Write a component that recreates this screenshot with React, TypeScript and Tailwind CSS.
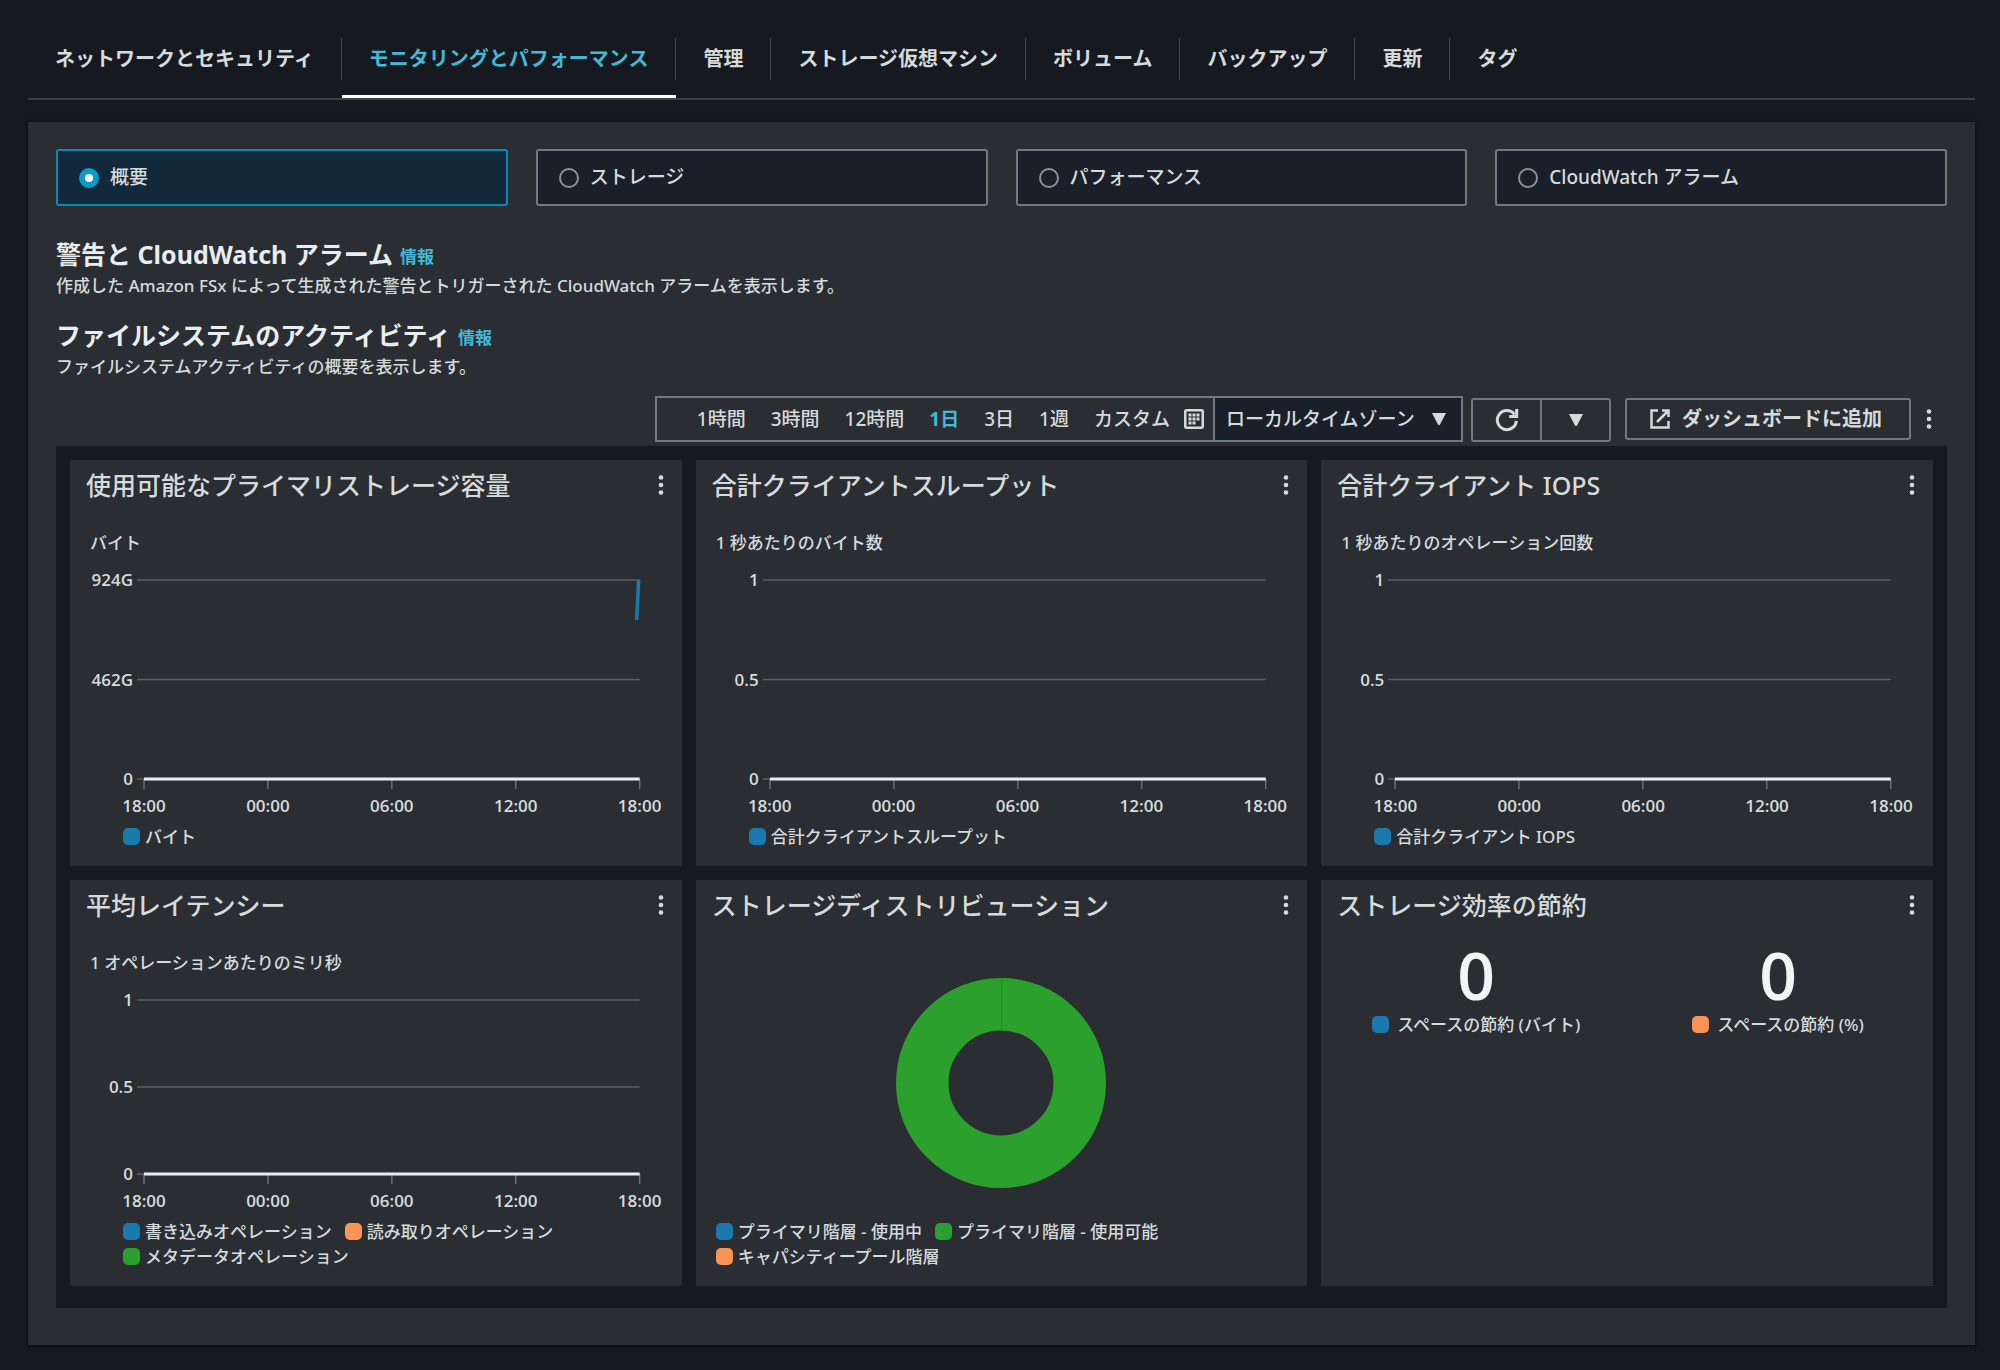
import { useState } from "react";
import type { ReactNode } from "react";

const tabs = [
  "ネットワークとセキュリティ",
  "モニタリングとパフォーマンス",
  "管理",
  "ストレージ仮想マシン",
  "ボリューム",
  "バックアップ",
  "更新",
  "タグ",
];

const views = ["概要", "ストレージ", "パフォーマンス", "CloudWatch アラーム"];
const ranges = ["1時間", "3時間", "12時間", "1日", "3日", "1週"];
const hours = ["18:00", "00:00", "06:00", "12:00", "18:00"];

function Kebab({ label }: { label: string }) {
  return (
    <button type="button" aria-label={label} className="flex h-6 w-4 items-center justify-center">
      <svg width="6" height="22" viewBox="0 0 6 22" fill="#d5dbdb" aria-hidden="true">
        <circle cx="3" cy="3.5" r="2.3" />
        <circle cx="3" cy="11" r="2.3" />
        <circle cx="3" cy="18.5" r="2.3" />
      </svg>
    </button>
  );
}

function Caret() {
  return (
    <svg width="14" height="12" viewBox="0 0 14 12" fill="#d5dbdb" aria-hidden="true">
      <path d="M0 0h14L8 11.500q-1 1-2 0z" />
    </svg>
  );
}

function Swatch({ color }: { color: string }) {
  return <span className={`size-[17px] shrink-0 rounded-[5px] ${color}`} />;
}

type Series = { name: string; color: string };

function Legend({ items, indent }: { items: Series[]; indent: string }) {
  return (
    <ul className={`flex flex-wrap gap-x-[13px] ${indent}`}>
      {items.map((s) => (
        <li key={s.name} className="flex h-[25px] items-center gap-[5px] text-[17px] font-medium">
          <Swatch color={s.color} />
          {s.name}
        </li>
      ))}
    </ul>
  );
}

function Card({ title, children }: { title: string; children: ReactNode }) {
  return (
    <section className="flex flex-col bg-[#2a2e33] pb-[17px]">
      <header className="flex h-[50px] shrink-0 items-center justify-between pl-4 pr-[13px]">
        <h3 className="text-[25px] font-medium leading-8">{title}</h3>
        <Kebab label={`${title}のメニュー`} />
      </header>
      {children}
    </section>
  );
}

function LineChart({
  unit,
  labels,
  series,
  children,
}: {
  unit: string;
  labels: string[];
  series: Series[];
  children?: ReactNode;
}) {
  return (
    <>
      <p className="mt-[21px] h-6 shrink-0 pl-5 text-[17px] font-medium leading-6">{unit}</p>
      <div className="mt-[25px] flex flex-1 pr-[42px]">
        <div className="-my-3 flex w-[63px] flex-col justify-between text-right font-['Open_Sans',sans-serif] text-[17px] font-semibold leading-6">
          {labels.map((l) => (
            <span key={l}>{l}</span>
          ))}
        </div>
        <div className="relative ml-1 flex-1 pl-[7px]">
          <svg width="100%" height="100%" className="absolute inset-0 overflow-visible" aria-hidden="true">
            <g stroke="#5a6066" strokeWidth="1.5">
              <line x1="0" x2="100%" y1="0" y2="0" />
              <line x1="0" x2="100%" y1="50%" y2="50%" />
              <line x1="0" x2="7" y1="100%" y2="100%" />
            </g>
          </svg>
          <div className="relative h-full">
            <svg width="100%" height="100%" className="absolute inset-0 overflow-visible" aria-hidden="true">
              <svg width="100%" height="10" y="100%" className="overflow-visible">
                <g stroke="#687078" strokeWidth="1.5">
                  <line x1="0" x2="0" y1="0" y2="10" />
                  <line x1="25%" x2="25%" y1="0" y2="10" />
                  <line x1="50%" x2="50%" y1="0" y2="10" />
                  <line x1="75%" x2="75%" y1="0" y2="10" />
                  <line x1="100%" x2="100%" y1="0" y2="10" />
                </g>
              </svg>
              <line x1="0" x2="100%" y1="100%" y2="100%" stroke="#eaeded" strokeWidth="3" />
              {children}
            </svg>
          </div>
        </div>
      </div>
      <div className="ml-[74px] mr-[42px] mt-[15px] flex h-6 shrink-0 justify-between font-['Open_Sans',sans-serif] text-[17px] font-semibold leading-6">
        {hours.map((h, i) => (
          <span key={i} className="flex w-0 justify-center">
            {h}
          </span>
        ))}
      </div>
      <div className="mt-1.5">
        <Legend items={series} indent="pl-[53px] pr-6" />
      </div>
    </>
  );
}

function Stat({ value, name, color }: { value: string; name: string; color: string }) {
  return (
    <div className="flex flex-col items-center">
      <strong className="mt-1.5 font-['Open_Sans',sans-serif] text-[66px] font-semibold leading-[76px] text-[#f2f3f3]">
        {value}
      </strong>
      <div className="flex h-[25px] items-center gap-2 text-[17px] font-medium">
        <Swatch color={color} />
        {name}
      </div>
    </div>
  );
}

function SectionHeading({ title, text }: { title: string; text: string }) {
  return (
    <div>
      <h2 className="flex items-center gap-[7px] text-[25px] font-bold leading-[38px] text-[#eaeded]">
        {title}
        <a href="#info" className="pt-1.5 text-[17px] leading-6 text-[#44b9d6]">
          情報
        </a>
      </h2>
      <p className="text-[17px] font-medium leading-[26px]">{text}</p>
    </div>
  );
}

const blue = "bg-[#1a7aae]";
const orange = "bg-[#fb9356]";
const green = "bg-[#2ca02c]";

export default function App() {
  const [view, setView] = useState(0);
  const [range, setRange] = useState(3);

  return (
    <main className="min-h-screen bg-[#161920] pb-[25px] pl-7 pr-[25px] pt-[38px] font-['Noto_Sans','Noto_Sans_CJK_JP',sans-serif] text-[#d5dbdb]">
      <nav className="border-b-2 border-[#3c4147]">
        <ul className="flex">
          {tabs.map((tab, i) => (
            <li key={tab}>
              <a
                href={`#tab-${i}`}
                aria-current={i === 1 ? "page" : undefined}
                className={`flex h-[60px] items-start ${
                  i === 1 ? "border-b-[3px] border-white text-[#44b9d6]" : ""
                }`}
              >
                <span
                  className={`flex h-[42px] items-center whitespace-nowrap px-[27px] text-[20px] font-bold ${
                    i < tabs.length - 1 ? "border-r border-[#414750]" : ""
                  }`}
                >
                  {tab}
                </span>
              </a>
            </li>
          ))}
        </ul>
      </nav>

      <div className="mt-[22px] bg-[#2a2e33] px-7 pb-[37px] pt-[27px] shadow-[0_1px_3px_1px_rgba(0,0,0,0.5)]">
        <fieldset aria-label="表示" className="grid grid-cols-4 gap-7">
          {views.map((name, i) => (
            <label
              key={name}
              className={`flex h-[57px] items-center gap-[11px] rounded-[3px] border-2 px-[21px] text-[19px] font-medium ${
                i === view ? "border-[#0a89b9] bg-[#12293b]" : "border-[#6f7a7d] bg-[#1a2029]"
              }`}
            >
              <input
                type="radio"
                name="view"
                checked={i === view}
                onChange={() => setView(i)}
                className="size-5 appearance-none rounded-full border-2 border-[#879596] checked:border-[6px] checked:border-[#0a9cc7] checked:bg-white"
              />
              {name}
            </label>
          ))}
        </fieldset>

        <div className="mt-[29px] flex flex-col gap-[17px]">
          <SectionHeading
            title="警告と CloudWatch アラーム"
            text="作成した Amazon FSx によって生成された警告とトリガーされた CloudWatch アラームを表示します。"
          />
          <SectionHeading title="ファイルシステムのアクティビティ" text="ファイルシステムアクティビティの概要を表示します。" />
        </div>

        <div className="mt-4 flex items-center justify-end pr-[10px] text-[19px] font-medium">
          <div className="flex h-[46px] items-center border-2 border-[#6f7a7d]">
            <div className="flex items-center gap-[25px] pl-10 pr-[9px]">
              {ranges.map((r, i) => (
                <button
                  key={r}
                  type="button"
                  onClick={() => setRange(i)}
                  className={i === range ? "font-bold text-[#44b9d6]" : ""}
                >
                  {r}
                </button>
              ))}
              <button type="button" className="flex items-center gap-[14px]">
                カスタム
                <svg width="20" height="20" viewBox="0 0 20 20" aria-hidden="true">
                  <rect x="1.25" y="1.25" width="17.5" height="17.5" rx="1.5" fill="none" stroke="#d5dbdb" strokeWidth="2.5" />
                  <path
                    fill="#d5dbdb"
                    d="M4.500 4.500h3v3h-3zM8.500 4.500h3v3h-3zM12.500 4.500h3v3h-3zM4.500 8.500h3v3h-3zM8.500 8.500h3v3h-3zM12.500 8.500h3v3h-3zM4.500 12.500h3v3h-3zM8.500 12.500h3v3h-3z"
                  />
                </svg>
              </button>
            </div>
            <div className="relative flex h-full items-center border-l-2 border-[#6f7a7d] bg-[#1a2029]">
              <select
                aria-label="タイムゾーン"
                className="h-full w-[246px] appearance-none bg-transparent pl-[11px] outline-none"
              >
                <option>ローカルタイムゾーン</option>
              </select>
              <span className="pointer-events-none absolute right-[15px]">
                <Caret />
              </span>
            </div>
          </div>
          <div className="ml-2 flex h-[46px] items-stretch pt-0.5">
            <button
              type="button"
              aria-label="更新"
              className="flex w-[71px] items-center justify-center rounded-l-[3px] border-2 border-[#6f7a7d]"
            >
              <svg width="24" height="24" viewBox="0 0 24 24" fill="none" stroke="#d5dbdb" strokeWidth="3" aria-hidden="true">
                <path d="M21.300 12.800A9.500 9.500 0 1 1 19.500 6.500" />
                <path d="M21.700 1v7.500h-7.500" />
              </svg>
            </button>
            <button
              type="button"
              aria-label="更新間隔"
              className="-ml-0.5 flex w-[71px] items-center justify-center rounded-r-[3px] border-2 border-[#6f7a7d]"
            >
              <Caret />
            </button>
          </div>
          <button
            type="button"
            className="ml-[14px] flex h-[42px] items-center gap-3 rounded-[3px] border-2 border-[#6f7a7d] pl-[23px] pr-[27px] text-[20px] font-bold"
          >
            <svg width="20" height="20" viewBox="0 0 20 20" fill="none" stroke="#d5dbdb" strokeWidth="2.500" aria-hidden="true">
              <path d="M8 1.500H1.500v17H18.500V12M12 1.500h6.500V8M18 2 7 13" />
            </svg>
            ダッシュボードに追加
          </button>
          <span className="ml-[10px] flex">
            <Kebab label="ダッシュボードのメニュー" />
          </span>
        </div>

        <div className="mt-1 grid auto-rows-[406px] grid-cols-3 gap-[14px] bg-[#161920] px-[14px] pb-[22px] pt-[14px]">
          <Card title="使用可能なプライマリストレージ容量">
            <LineChart unit="バイト" labels={["924G", "462G", "0"]} series={[{ name: "バイト", color: blue }]}>
              <svg x="100%" y="0" className="overflow-visible">
                <path d="M-1 0-3 40" stroke="#1a7aae" strokeWidth="3.500" />
              </svg>
            </LineChart>
          </Card>
          <Card title="合計クライアントスループット">
            <LineChart
              unit="1 秒あたりのバイト数"
              labels={["1", "0.5", "0"]}
              series={[{ name: "合計クライアントスループット", color: blue }]}
            />
          </Card>
          <Card title="合計クライアント IOPS">
            <LineChart
              unit="1 秒あたりのオペレーション回数"
              labels={["1", "0.5", "0"]}
              series={[{ name: "合計クライアント IOPS", color: blue }]}
            />
          </Card>
          <Card title="平均レイテンシー">
            <LineChart
              unit="1 オペレーションあたりのミリ秒"
              labels={["1", "0.5", "0"]}
              series={[
                { name: "書き込みオペレーション", color: blue },
                { name: "読み取りオペレーション", color: orange },
                { name: "メタデータオペレーション", color: green },
              ]}
            />
          </Card>
          <Card title="ストレージディストリビューション">
            <div className="flex flex-1 items-center justify-center pt-[17px]">
              <svg width="210" height="210" viewBox="0 0 210 210" fill="none" aria-hidden="true">
                <circle cx="105" cy="105" r="78.750" stroke="#2ca02c" strokeWidth="52.500" />
                <path d="M105.500 0v52.500" stroke="#2a7f45" />
              </svg>
            </div>
            <Legend
              indent="pl-5 pr-[14px]"
              items={[
                { name: "プライマリ階層 - 使用中", color: blue },
                { name: "プライマリ階層 - 使用可能", color: green },
                { name: "キャパシティープール階層", color: orange },
              ]}
            />
          </Card>
          <Card title="ストレージ効率の節約">
            <div className="grid grid-cols-2 px-1">
              <Stat value="0" name="スペースの節約 (バイト)" color={blue} />
              <Stat value="0" name="スペースの節約 (%)" color={orange} />
            </div>
          </Card>
        </div>
      </div>
    </main>
  );
}
